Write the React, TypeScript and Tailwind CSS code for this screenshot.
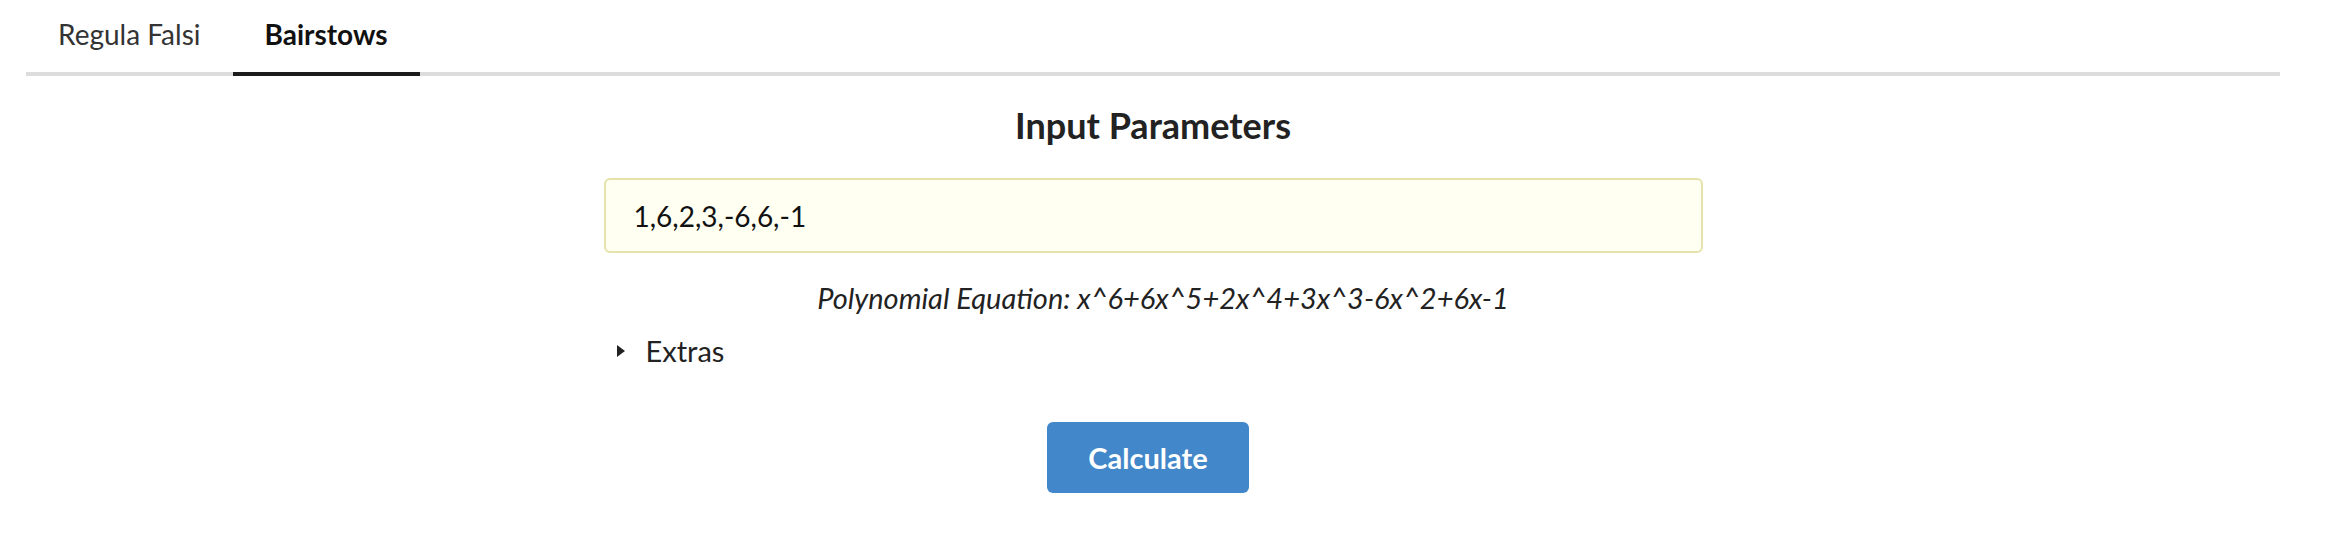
import { useState } from 'react';

const tabs = ['Regula Falsi', 'Bairstows'];

export default function App() {
  const [active, setActive] = useState('Bairstows');
  const [coeffs, setCoeffs] = useState('1,6,2,3,-6,6,-1');

  return (
    <div className="min-h-screen bg-white pl-[26px] pr-[66px] font-['Lato',sans-serif] text-[#222]">
      {/* Tabs */}
      <div className="flex border-b-4 border-[#dddddd]">
        {tabs.map((tab) => (
          <button
            key={tab}
            onClick={() => setActive(tab)}
            className={`-mb-1 border-b-4 px-8 pt-4 pb-5 text-[28px] leading-[36px] ${
              active === tab
                ? 'border-[#1c1c1c] font-bold text-[#111]'
                : 'border-transparent text-[#333]'
            }`}
          >
            {tab}
          </button>
        ))}
      </div>

      {/* Form */}
      <div className="flex flex-col items-center">
        <h2 className="mt-[29px] text-[36px] leading-[40px] font-bold text-[#222]">Input Parameters</h2>

        <input
          value={coeffs}
          onChange={(e) => setCoeffs(e.target.value)}
          className="mt-[33px] h-[75px] w-[1099px] rounded-md border-2 border-[#e6e2ac] bg-[#fffff2] px-7 text-[28px] text-[#111] outline-none"
        />

        <p className="mt-[27px] pl-[20px] text-[29px] leading-[36px] italic text-[#222]">
          Polynomial Equation: x^6+6x^5+2x^4+3x^3-6x^2+6x-1
        </p>

        <details className="mt-[17px] w-[1099px]">
          <summary className="flex cursor-pointer list-none items-center text-[29px] leading-[36px] text-[#222] [&::-webkit-details-marker]:hidden">
            <svg width="8" height="12" viewBox="0 0 8 12" className="ml-[13px] mr-[21px]">
              <path d="M0 0 L8 6 L0 12 Z" fill="#222" />
            </svg>
            Extras
          </summary>
        </details>

        <button className="mt-[53px] mr-[10px] h-[71px] w-[202px] rounded-md bg-[#4287c9] text-[29px] font-bold text-white">
          Calculate
        </button>
      </div>
    </div>
  );
}
